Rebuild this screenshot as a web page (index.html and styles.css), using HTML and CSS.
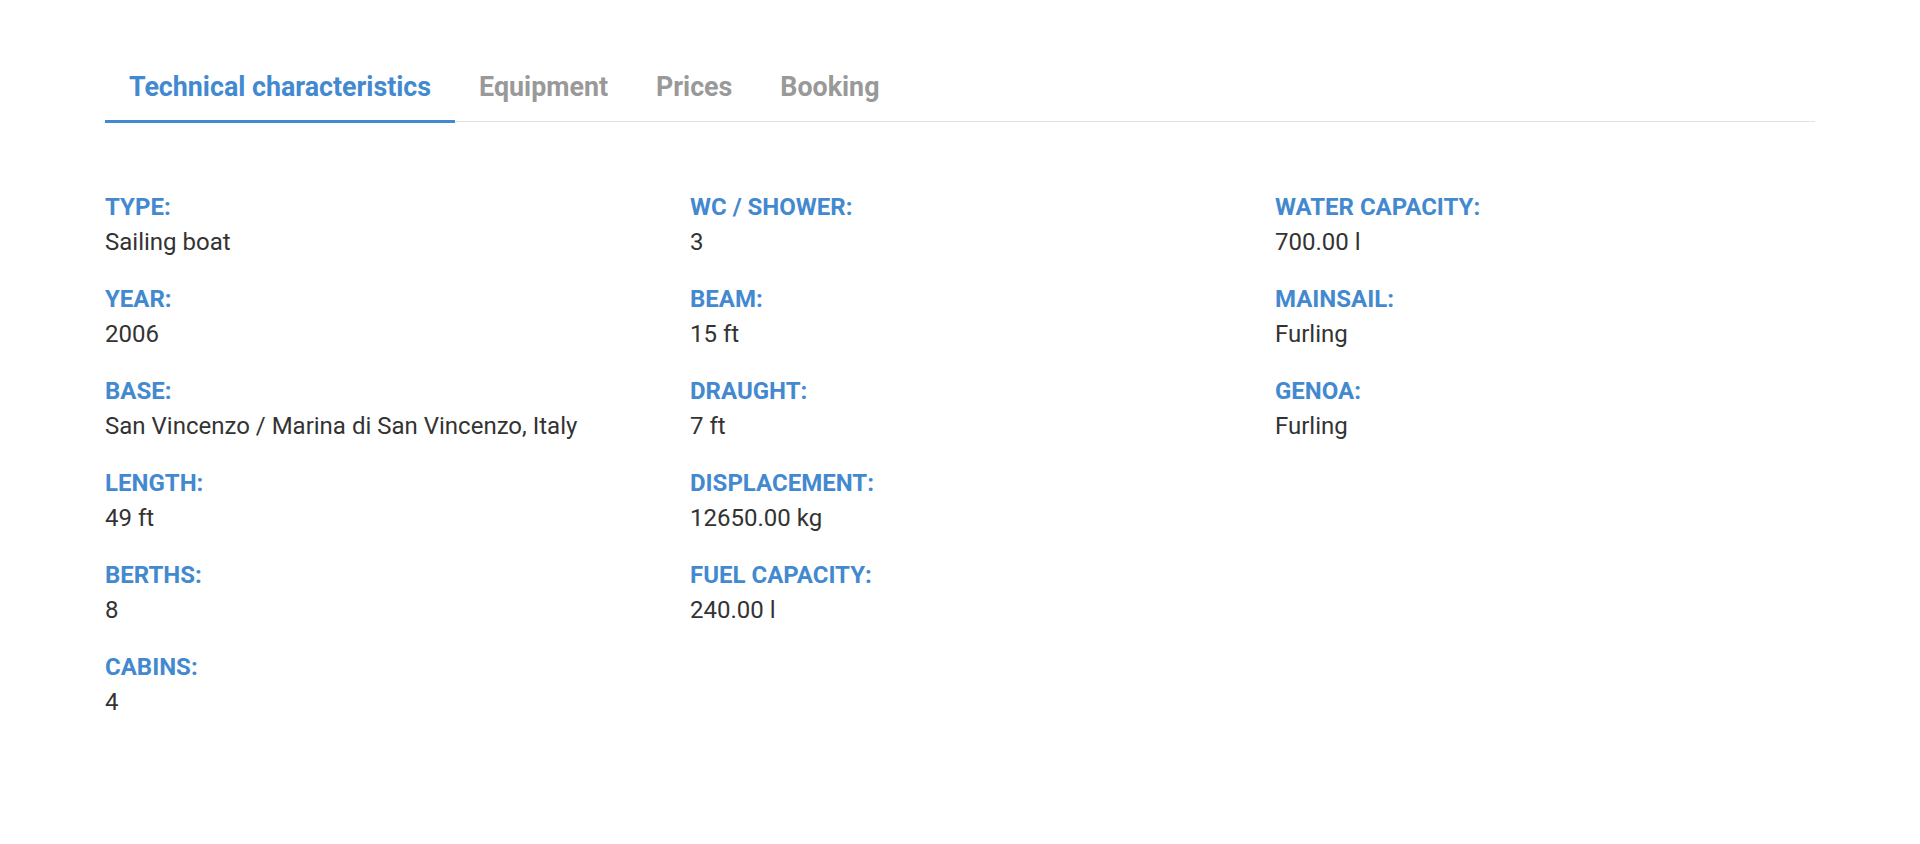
FILE: index.html
```html
<!DOCTYPE html>
<html lang="en">
<head>
  <meta charset="UTF-8">
  <title>Yacht details</title>
  <meta name="viewport" content="width=device-width, initial-scale=1">
  <link rel="stylesheet" href="styles.css">
</head>
<body>

  <div class="container">
    <!-- Tabs -->
    <nav class="tabs">
      <a class="tab active" href="#">Technical characteristics</a>
      <a class="tab" href="#">Equipment</a>
      <a class="tab" href="#">Prices</a>
      <a class="tab" href="#">Booking</a>
    </nav>

    <!-- Specs -->
    <div class="specs">
      <div class="spec-col">
        <div class="spec"><div class="spec-label">Type:</div><div class="spec-value">Sailing boat</div></div>
        <div class="spec"><div class="spec-label">Year:</div><div class="spec-value">2006</div></div>
        <div class="spec"><div class="spec-label">Base:</div><div class="spec-value">San Vincenzo / Marina di San Vincenzo, Italy</div></div>
        <div class="spec"><div class="spec-label">Length:</div><div class="spec-value">49 ft</div></div>
        <div class="spec"><div class="spec-label">Berths:</div><div class="spec-value">8</div></div>
        <div class="spec"><div class="spec-label">Cabins:</div><div class="spec-value">4</div></div>
      </div>
      <div class="spec-col">
        <div class="spec"><div class="spec-label">WC / Shower:</div><div class="spec-value">3</div></div>
        <div class="spec"><div class="spec-label">Beam:</div><div class="spec-value">15 ft</div></div>
        <div class="spec"><div class="spec-label">Draught:</div><div class="spec-value">7 ft</div></div>
        <div class="spec"><div class="spec-label">Displacement:</div><div class="spec-value">12650.00 kg</div></div>
        <div class="spec"><div class="spec-label">Fuel capacity:</div><div class="spec-value">240.00 l</div></div>
      </div>
      <div class="spec-col">
        <div class="spec"><div class="spec-label">Water capacity:</div><div class="spec-value">700.00 l</div></div>
        <div class="spec"><div class="spec-label">Mainsail:</div><div class="spec-value">Furling</div></div>
        <div class="spec"><div class="spec-label">Genoa:</div><div class="spec-value">Furling</div></div>
      </div>
    </div>
  </div>

</body>
</html>
```

FILE: styles.css
```css
body { margin: 0; background: #fff; font-family: Roboto, "Liberation Sans", sans-serif; color: #333; }
.container { width: 1710px; margin: 55px auto 0; }

/* Tabs */
.tabs { display: flex; border-bottom: 1px solid #e3e3e3; }
.tab {
  display: block; padding: 17px 24px 18px; margin-bottom: -2px;
  font-size: 26.8px; line-height: 30px; font-weight: 700;
  color: #999; text-decoration: none; border-bottom: 3px solid transparent;
}
.tab.active { color: #4389cf; border-bottom-color: #4389cf; }

/* Specs */
.specs { display: grid; grid-template-columns: 585px 585px 1fr; margin-top: 71px; }
.spec { margin-bottom: 27px; }
.spec-label {
  font-size: 24px; line-height: 28px; font-weight: 700;
  text-transform: uppercase; color: #4389cf; margin-bottom: 5px;
}
.spec-value { font-size: 24px; line-height: 32px; color: #333; }
```
